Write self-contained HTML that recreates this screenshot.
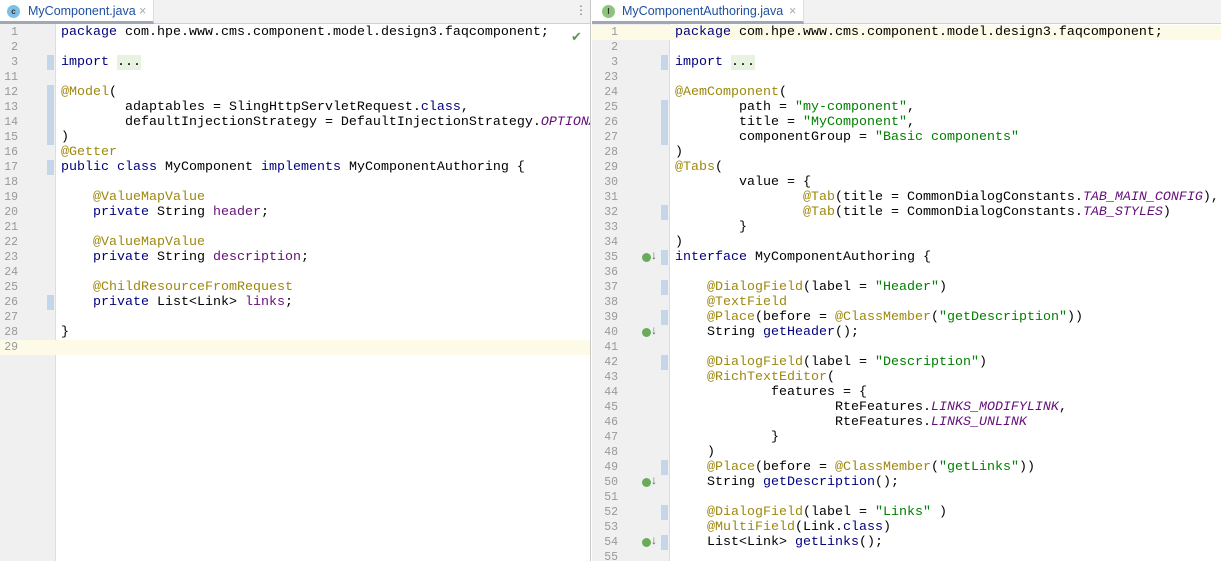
<!DOCTYPE html>
<html><head><meta charset="utf-8"><style>
*{margin:0;padding:0;box-sizing:border-box}
body{width:1221px;height:561px;overflow:hidden;background:#fff;font-family:"Liberation Sans",sans-serif;position:relative}
.pane{position:absolute;top:0;height:561px;overflow:hidden}
.tabs{position:absolute;top:0;left:0;right:0;height:24px;background:#f2f2f2;border-bottom:1px solid #d0d0d0}
.tab{position:absolute;top:0;height:24px;background:#fff;font-size:12.5px;color:#2050a0;line-height:23px;border-bottom:3px solid #a0a8b4;border-right:1px solid #ddd}
.ic{position:absolute;top:5px;width:13px;height:13px;border-radius:50%;font-size:8px;line-height:13px;text-align:center;color:#333;font-weight:bold}
.gut{position:absolute;top:24px;bottom:0;left:0;background:#f0f0f0;border-right:1px solid #ddd}
.ln{position:absolute;height:15px;font:11.5px/15px "Liberation Mono",monospace;color:#999;text-align:right}
.cd{position:absolute;height:15px;font:13.33px/15px "Liberation Mono",monospace;color:#000;white-space:pre}
.k{color:#000080}.a{color:#9e880d}.s{color:#008000}.f{color:#660e7a}.i{color:#660e7a;font-style:italic}
.fold{position:absolute;width:7px;height:15px;background:#c4d6e8}
.gi{position:absolute;width:9px;height:9px;border-radius:50%;background:#6aaa5a}
</style></head><body>
<div class="pane" style="left:0;width:591px;border-right:1px solid #c8c8c8">
<div class="tabs"><div class="tab" style="left:0;width:154px"><span class="ic" style="left:7px;background:#7cc0e8">c</span><span style="position:absolute;left:28px">MyComponent.java</span><span style="position:absolute;left:139px;color:#aaa">×</span></div>
<span style="position:absolute;left:575px;top:3px;color:#777;font-size:12px">⋮</span></div>
<div class="gut" style="width:56px"></div>
<div style="position:absolute;left:0;top:340px;width:591px;height:15px;background:#fdfbe8"></div>
<span style="position:absolute;left:571px;top:29px;color:#5a9a4a;font-size:13px">✔</span>
<div id="L"></div>
</div>
<div class="pane" style="left:592px;width:629px">
<div class="tabs"><div class="tab" style="left:0;width:212px"><span class="ic" style="left:10px;background:#8cc47c">I</span><span style="position:absolute;left:30px">MyComponentAuthoring.java</span><span style="position:absolute;left:197px;color:#aaa">×</span></div></div>
<div class="gut" style="width:78px"></div>
<div style="position:absolute;left:0;top:25px;width:629px;height:15px;background:#fdfbe8"></div>
<div id="R"></div>
</div>
<script>
function build(id,lines,lnx,cx,extra){
 var h='';
 lines.forEach(function(l,i){var t=25+i*15;
  h+='<div class="ln" style="left:0;width:'+lnx+'px;top:'+t+'px">'+l[0]+'</div>';
  h+='<div class="cd" style="left:'+cx+'px;top:'+t+'px">'+l[1]+'</div>';
  if(l[2])h+='<div class="fold" style="left:'+(cx-14)+'px;top:'+t+'px"></div>';
  if(l[3])h+='<div class="gi" style="left:'+(cx-33)+'px;top:'+(t+3)+'px"></div><span style="position:absolute;left:'+(cx-24)+'px;top:'+(t-2)+'px;font-size:12px;color:#666">↓</span>';
 });
 document.getElementById(id).innerHTML=h;
}
build('L',[
['1','<span class="k">package</span> com.hpe.www.cms.component.model.design3.faqcomponent;'],
['2',''],
['3','<span class="k">import</span> <span style="background:#e8f2e0">...</span>',1],
['11',''],
['12','<span class="a">@Model</span>(',1],
['13','        adaptables = SlingHttpServletRequest.<span class="k">class</span>,',1],
['14','        defaultInjectionStrategy = DefaultInjectionStrategy.<span class="i">OPTIONAL</span>',1],
['15',')',1],
['16','<span class="a">@Getter</span>'],
['17','<span class="k">public class</span> MyComponent <span class="k">implements</span> MyComponentAuthoring {',1],
['18',''],
['19','    <span class="a">@ValueMapValue</span>'],
['20','    <span class="k">private</span> String <span class="f">header</span>;'],
['21',''],
['22','    <span class="a">@ValueMapValue</span>'],
['23','    <span class="k">private</span> String <span class="f">description</span>;'],
['24',''],
['25','    <span class="a">@ChildResourceFromRequest</span>'],
['26','    <span class="k">private</span> List&lt;Link&gt; <span class="f">links</span>;',1],
['27',''],
['28','}'],
['29','']
],18,61);
build('R',[
['1','<span class="k">package</span> com.hpe.www.cms.component.model.design3.faqcomponent;'],
['2',''],
['3','<span class="k">import</span> <span style="background:#e8f2e0">...</span>',1],
['23',''],
['24','<span class="a">@AemComponent</span>('],
['25','        path = <span class="s">"my-component"</span>,',1],
['26','        title = <span class="s">"MyComponent"</span>,',1],
['27','        componentGroup = <span class="s">"Basic components"</span>',1],
['28',')'],
['29','<span class="a">@Tabs</span>('],
['30','        value = {'],
['31','                <span class="a">@Tab</span>(title = CommonDialogConstants.<span class="i">TAB_MAIN_CONFIG</span>),'],
['32','                <span class="a">@Tab</span>(title = CommonDialogConstants.<span class="i">TAB_STYLES</span>)',1],
['33','        }'],
['34',')'],
['35','<span class="k">interface</span> MyComponentAuthoring {',1,1],
['36',''],
['37','    <span class="a">@DialogField</span>(label = <span class="s">"Header"</span>)',1],
['38','    <span class="a">@TextField</span>'],
['39','    <span class="a">@Place</span>(before = <span class="a">@ClassMember</span>(<span class="s">"getDescription"</span>))',1],
['40','    String <span class="k">getHeader</span>();',0,1],
['41',''],
['42','    <span class="a">@DialogField</span>(label = <span class="s">"Description"</span>)',1],
['43','    <span class="a">@RichTextEditor</span>('],
['44','            features = {'],
['45','                    RteFeatures.<span class="i">LINKS_MODIFYLINK</span>,'],
['46','                    RteFeatures.<span class="i">LINKS_UNLINK</span>'],
['47','            }'],
['48','    )'],
['49','    <span class="a">@Place</span>(before = <span class="a">@ClassMember</span>(<span class="s">"getLinks"</span>))',1],
['50','    String <span class="k">getDescription</span>();',0,1],
['51',''],
['52','    <span class="a">@DialogField</span>(label = <span class="s">"Links"</span> )',1],
['53','    <span class="a">@MultiField</span>(Link.<span class="k">class</span>)'],
['54','    List&lt;Link&gt; <span class="k">getLinks</span>();',1,1],
['55','']
],26,83);
</script>
</body></html>
